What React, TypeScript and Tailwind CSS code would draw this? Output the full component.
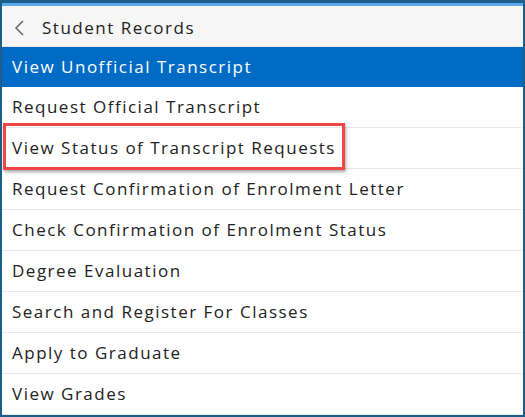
import React from 'react';

const items = [
  'View Unofficial Transcript',
  'Request Official Transcript',
  'View Status of Transcript Requests',
  'Request Confirmation of Enrolment Letter',
  'Check Confirmation of Enrolment Status',
  'Degree Evaluation',
  'Search and Register For Classes',
  'Apply to Graduate',
  'View Grades',
];

export default function App() {
  return (
    <div
      className="w-[525px] h-[417px] bg-white border-x-2 border-b-2 border-t-[3px] border-[#1c5e88] flex flex-col overflow-hidden"
      style={{ fontFamily: '"Open Sans", sans-serif' }}
    >
      <div className="h-[3px] bg-[#5aa9ec] shrink-0" />
      {/* header */}
      <div className="h-[41px] shrink-0 bg-[#f6f6f6] border-b border-[#e6e6e6] flex items-center pt-[3px]">
        <svg className="ml-[11px] w-[14px] h-[18px]" viewBox="0 0 14 18" fill="none">
          <path d="M10 2 L3 9 L10 16" stroke="#666" strokeWidth="1.5" />
        </svg>
        <span className="ml-[15px] text-[17px] tracking-[1.5px] text-[#222]">Student Records</span>
      </div>
      {/* list */}
      <div className="flex flex-col">
        {items.map((label, i) => (
          <div
            key={label}
            className={`relative flex items-center pl-[10px] text-[17px] tracking-[1.5px] ${
              i === 0 ? 'h-[40px] bg-[#006bc5] text-white' : 'h-[41px] text-[#222] border-b border-[#e8e8e8]'
            }`}
          >
            {label}
            {i === 2 && (
              <div className="absolute left-[1px] top-[-5px] w-[342px] h-[47px] border-[3px] border-[#f04646] shadow-[1px_2px_3px_rgba(0,0,0,0.35)]" />
            )}
          </div>
        ))}
      </div>
    </div>
  );
}
